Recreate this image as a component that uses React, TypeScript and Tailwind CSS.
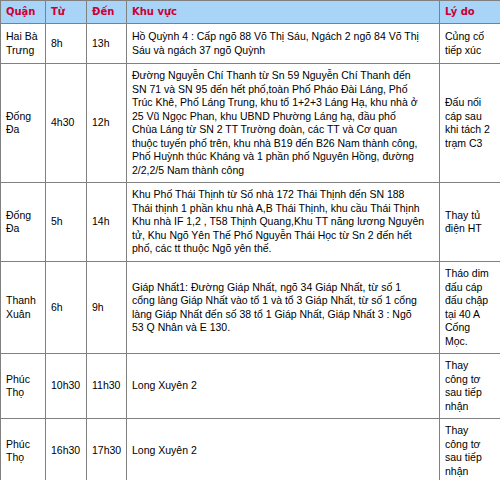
import React from "react";

type Row = {
  q: string[];
  from: string;
  to: string;
  area: string[];
  reason: string[];
  h: string;
};

const rows: Row[] = [
  {
    q: ["Hai Bà", "Trưng"],
    from: "8h",
    to: "13h",
    area: [
      "Hồ Quỳnh 4 : Cấp ngõ 88 Võ Thị Sáu, Ngách 2 ngõ 84 Võ Thị",
      "Sáu và ngách 37 ngõ Quỳnh",
    ],
    reason: ["Củng cố", "tiếp xúc"],
    h: "h-[40px]",
  },
  {
    q: ["Đống", "Đa"],
    from: "4h30",
    to: "12h",
    area: [
      "Đường Nguyễn Chí Thanh từ Sn 59 Nguyễn Chí Thanh đến",
      "SN 71 và SN 95 đến hết phố,toàn Phố Pháo Đài Láng, Phố",
      "Trúc Khê, Phố Láng Trung, khu tổ 1+2+3 Láng Hạ, khu nhà ở",
      "25 Vũ Ngọc Phan, khu UBND Phường Láng hạ, đầu phố",
      "Chùa Láng từ SN 2 TT Trường đoàn, các TT và Cơ quan",
      "thuộc tuyến phố trên, khu nhà B19 đến B26 Nam thành công,",
      "Phố Huỳnh thúc Kháng và 1 phần phố Nguyên Hồng, đường",
      "2/2,2/5 Nam thành công",
    ],
    reason: ["Đấu nối", "cáp sau", "khi tách 2", "trạm C3"],
    h: "h-[118px]",
  },
  {
    q: ["Đống", "Đa"],
    from: "5h",
    to: "14h",
    area: [
      "Khu Phố Thái Thịnh từ Số nhà 172 Thái Thịnh đến SN 188",
      "Thái thịnh 1 phần khu nhà A,B Thái Thịnh, khu cầu Thái Thịnh",
      "Khu nhà IF 1,2 , T58 Thịnh Quang,Khu TT năng lương Nguyên",
      "tử, Khu Ngõ Yên Thế Phố Nguyễn Thái Học từ Sn 2 đến hết",
      "phố, các tt thuộc Ngõ yên thế.",
    ],
    reason: ["Thay tủ", "điện HT"],
    h: "h-[79px]",
  },
  {
    q: ["Thanh", "Xuân"],
    from: "6h",
    to: "9h",
    area: [
      "Giáp Nhất1: Đường Giáp Nhất, ngõ 34 Giáp Nhất, từ số 1",
      "cổng làng Giáp Nhất vào tổ 1 và tổ 3 Giáp Nhất, từ số 1 cổng",
      "làng Giáp Nhất đến số 38 tổ 1 Giáp Nhất, Giáp Nhất 3 : Ngõ",
      "53 Q Nhân và E 130.",
    ],
    reason: ["Tháo dim", "đấu cáp", "đấu chập", "tại 40 A", "Cống", "Mọc."],
    h: "h-[92px]",
  },
  {
    q: ["Phúc", "Thọ"],
    from: "10h30",
    to: "11h30",
    area: ["Long Xuyên 2"],
    reason: ["Thay", "công tơ", "sau tiếp", "nhận"],
    h: "h-[65px]",
  },
  {
    q: ["Phúc", "Thọ"],
    from: "16h30",
    to: "17h30",
    area: ["Long Xuyên 2"],
    reason: ["Thay", "công tơ", "sau tiếp", "nhận"],
    h: "h-[65px]",
  },
];

function Lines({ lines }: { lines: string[] }) {
  return (
    <>
      {lines.map((l, i) => (
        <React.Fragment key={i}>
          {i > 0 && <br />}
          {l}
        </React.Fragment>
      ))}
    </>
  );
}

const th =
  "border border-[#808080] bg-[#a8d4f7] px-[5px] text-left align-middle font-bold text-[10px] text-[#cc0033] font-['DejaVu_Sans',Verdana,sans-serif]";
const td =
  "border border-[#808080] px-[5px] py-[5px] align-middle whitespace-nowrap";

export default function App() {
  return (
    <div className="w-[500px] h-[480px] overflow-hidden bg-white">
      <table className="w-[500px] table-fixed border-collapse font-['Liberation_Sans',Arial,sans-serif] text-[10.5px] leading-[13.5px] text-black">
        <colgroup>
          <col className="w-[45px]" />
          <col className="w-[41px]" />
          <col className="w-[40px]" />
          <col className="w-[313px]" />
          <col className="w-[61px]" />
        </colgroup>
        <thead>
          <tr className="h-[23px]">
            <th className={th}>Quận</th>
            <th className={th}>Từ</th>
            <th className={th}>Đến</th>
            <th className={th}>Khu vực</th>
            <th className={th}>Lý do</th>
          </tr>
        </thead>
        <tbody>
          {rows.map((r, i) => (
            <tr key={i} className={r.h}>
              <td className={td}>
                <Lines lines={r.q} />
              </td>
              <td className={td}>{r.from}</td>
              <td className={td}>{r.to}</td>
              <td className={td}>
                <Lines lines={r.area} />
              </td>
              <td className={td}>
                <Lines lines={r.reason} />
              </td>
            </tr>
          ))}
        </tbody>
      </table>
    </div>
  );
}
